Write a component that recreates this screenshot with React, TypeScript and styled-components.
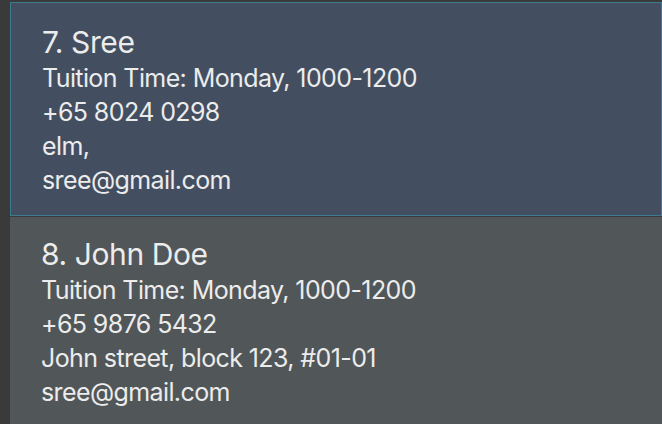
import React from "react";
import styled, { createGlobalStyle } from "styled-components";

const Global = createGlobalStyle`
  html, body { margin: 0; padding: 0; background: #3a3a3a; overflow: hidden; }
  body { font-family: Inter, "Noto Sans", sans-serif; }
`;

const List = styled.div`
  display: flex;
  flex-direction: column;
  gap: 1px;
  padding: 2px 0 0 10px;
  height: 424px;
  box-sizing: border-box;
`;

const Card = styled.div<{ $selected?: boolean }>`
  display: flex;
  flex-direction: column;
  background: ${(p) => (p.$selected ? "#434f61" : "#515658")};
  border: ${(p) => (p.$selected ? "1px solid #3d7b8e" : "none")};
  padding: ${(p) => (p.$selected ? "22px 31px 18px" : "20px 31px 18px")};
  color: #ececec;
`;

const Title = styled.div`
  font-size: 30px;
  line-height: 34px;
  letter-spacing: -0.4px;
  margin-bottom: 2px;
`;

const Line = styled.div`
  font-size: 25px;
  line-height: 34px;
  letter-spacing: -0.6px;
`;

const people = [
  { n: "7. Sree", t: "Tuition Time: Monday, 1000-1200", p: "+65 8024 0298", a: "elm,", e: "sree@gmail.com", sel: true },
  { n: "8. John Doe", t: "Tuition Time: Monday, 1000-1200", p: "+65 9876 5432", a: "John street, block 123, #01-01", e: "sree@gmail.com", sel: false },
];

export default function App() {
  return (
    <>
      <Global />
      <List>
        {people.map((x) => (
          <Card key={x.n} $selected={x.sel}>
            <Title>{x.n}</Title>
            <Line>{x.t}</Line>
            <Line>{x.p}</Line>
            <Line>{x.a}</Line>
            <Line>{x.e}</Line>
          </Card>
        ))}
      </List>
    </>
  );
}
